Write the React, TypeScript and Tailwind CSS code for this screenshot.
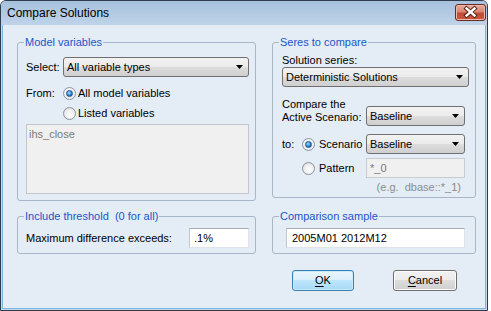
import React from 'react';

const Dropdown = ({ value, className = '' }: { value: string; className?: string }) => (
    <div
        className={`h-[20px] rounded-[3px] border border-[#707070] bg-[linear-gradient(#f2f2f2_0%,#ebebeb_50%,#dddddd_50%,#cfcfcf_100%)] flex items-center justify-between pl-[3px] pr-[5px] ${className}`}
    >
        <span className="leading-[14px]">{value}</span>
        <svg width="7" height="4" viewBox="0 0 7 4">
            <path d="M0 0H7L3.5 4Z" fill="#000" />
        </svg>
    </div>
);

const Radio = ({ checked = false }: { checked?: boolean }) =>
    checked ? (
        <span className="w-[13px] h-[13px] shrink-0 rounded-full border border-[#8a96a3] bg-[radial-gradient(circle_at_50%_40%,#ffffff,#dfe3e8)] flex items-center justify-center">
            <span className="w-[7px] h-[7px] rounded-full border border-[#1d4f86] bg-[radial-gradient(circle_at_40%_35%,#a6dcff,#2a8ad8_55%,#0e4a8c)]" />
        </span>
    ) : (
        <span className="w-[13px] h-[13px] shrink-0 rounded-full border border-[#8e939a] bg-[radial-gradient(circle_at_55%_60%,#ffffff,#f1f1f1_45%,#cfd2d6)]" />
    );

const GroupBox = ({
    title,
    className,
    children,
}: {
    title: string;
    className: string;
    children: React.ReactNode;
}) => (
    <fieldset className={`m-0 p-0 min-w-0 rounded-[3px] border border-[#a8b6c8] ${className}`}>
        <legend className="ml-[6px] px-[1px] leading-[14px] text-[#1b56c8] whitespace-pre">{title}</legend>
        {children}
    </fieldset>
);

const CloseButton = () => (
    <div className="mt-[3px] w-[31px] h-[17px] rounded-[3px] border border-[#6a2a20] bg-[linear-gradient(#e9ab9b_0%,#d98673_45%,#c24a33_55%,#c9593f_100%)] shadow-[inset_0_0_0_1px_#efb9ab]">
        <svg width="29" height="15" viewBox="0 0 29 15">
            <path d="M10.5 3.5L18.5 10.5M18.5 3.5L10.5 10.5" stroke="#4a1a12" strokeWidth="4.2" strokeLinecap="square" />
            <path d="M10.5 3.5L18.5 10.5M18.5 3.5L10.5 10.5" stroke="#ffffff" strokeWidth="2.4" strokeLinecap="square" />
        </svg>
    </div>
);

export default function App() {
    return (
        <div className="w-[491px] h-[311px] bg-white font-['Liberation_Sans',Arial,sans-serif] text-[11px] leading-[14px] text-black">
            <div className="w-[488px] h-[311px] flex flex-col rounded-t-[6px] border border-[#2f3d50] bg-[#c3d7ec]">
                <div className="h-[24px] flex justify-between pl-[6px] pr-[1px] rounded-t-[5px] bg-[linear-gradient(#a7c1dd,#bfd3e9)]">
                    <span className="text-[12px] leading-[24px]">Compare Solutions</span>
                    <CloseButton />
                </div>
                <div className="flex-1 mx-[1px] mb-[1px] border border-t-0 border-[#7cb8e0] bg-[#e4ecf5] pl-[14px] pt-[10px]">
                    <div className="flex items-start gap-[16px]">
                        <GroupBox title="Model variables" className="w-[239px] h-[166px]">
                            <div className="pl-[8px] pr-[6px] pt-[8px]">
                                <div className="flex items-center">
                                    <span className="w-[37px]">Select:</span>
                                    <Dropdown value="All variable types" className="w-[186px]" />
                                </div>
                                <div className="mt-[6px] flex">
                                    <span className="w-[37px] h-[20px] leading-[20px]">From:</span>
                                    <div>
                                        <label className="h-[20px] flex items-center gap-[2px]">
                                            <Radio checked />
                                            All model variables
                                        </label>
                                        <label className="h-[20px] flex items-center gap-[2px]">
                                            <Radio />
                                            Listed variables
                                        </label>
                                    </div>
                                </div>
                                <div className="mt-[1px] h-[70px] border border-[#c3c6ca] bg-[#f0f0f0] pl-[2px] pt-[2px] text-[#7a7a7a]">
                                    ihs_close
                                </div>
                            </div>
                        </GroupBox>
                        <GroupBox title="Seres to compare" className="w-[204px] h-[163px]">
                            <div className="pl-[9px] pr-[6px]">
                                <div className="pt-[4px] h-[18px]">Solution series:</div>
                                <Dropdown value="Deterministic Solutions" className="w-full" />
                                <div className="mt-[11px] flex">
                                    <div className="w-[84px] leading-[13px]">
                                        Compare the
                                        <br />
                                        Active Scenario:
                                    </div>
                                    <Dropdown value="Baseline" className="mt-[8px] w-[99px]" />
                                </div>
                                <div className="mt-[8px] h-[20px] flex items-center">
                                    <span className="w-[20px]">to:</span>
                                    <Radio checked />
                                    <span className="ml-[4px] w-[47px]">Scenario</span>
                                    <Dropdown value="Baseline" className="w-[99px]" />
                                </div>
                                <div className="mt-[4px] h-[20px] flex items-center">
                                    <span className="w-[20px]" />
                                    <Radio />
                                    <span className="ml-[4px] w-[47px]">Pattern</span>
                                    <div className="w-[99px] h-[20px] border border-[#c9cccf] bg-[#f0f0f0] pl-[3px] leading-[18px] text-[#7a7a7a]">
                                        *_0
                                    </div>
                                </div>
                                <div className="mt-[2px] pr-[8px] text-right whitespace-pre text-[#8c8c8c]">(e.g.  dbase::*_1)</div>
                            </div>
                        </GroupBox>
                    </div>
                    <div className="mt-[8px] flex items-start gap-[16px]">
                        <GroupBox title="Include threshold  (0 for all)" className="w-[239px] h-[45px]">
                            <div className="pl-[8px] pr-[6px] pt-[5px] flex items-center justify-between">
                                <span>Maximum difference exceeds:</span>
                                <div className="w-[60px] h-[20px] border border-[#e0e3e8] border-t-[#a9acb2] border-l-[#c2c5ca] bg-white pl-[4px] leading-[18px]">
                                    .1%
                                </div>
                            </div>
                        </GroupBox>
                        <GroupBox title="Comparison sample" className="w-[204px] h-[45px]">
                            <div className="pl-[13px] pt-[5px]">
                                <div className="w-[179px] h-[20px] border border-[#e0e3e8] border-t-[#a9acb2] border-l-[#c2c5ca] bg-white pl-[5px] leading-[18px]">
                                    2005M01 2012M12
                                </div>
                            </div>
                        </GroupBox>
                    </div>
                    <div className="mt-[16px] flex">
                        <button className="ml-[275px] w-[62px] h-[21px] rounded-[3px] border border-[#3c7fb1] bg-[linear-gradient(#eaf6fd_0%,#d9f0fc_50%,#bee6fd_50%,#a7d9f5_100%)] shadow-[inset_0_0_0_1px_#c8ebfb] leading-[19px]">
                            <span className="underline underline-offset-[2px]">O</span>K
                        </button>
                        <button className="ml-[39px] w-[64px] h-[21px] rounded-[3px] border border-[#707070] bg-[linear-gradient(#f2f2f2_0%,#ebebeb_50%,#dddddd_50%,#cfcfcf_100%)] shadow-[inset_0_0_0_1px_#fbfbfb] leading-[19px]">
                            <span className="underline underline-offset-[2px]">C</span>ancel
                        </button>
                    </div>
                </div>
            </div>
        </div>
    );
}
